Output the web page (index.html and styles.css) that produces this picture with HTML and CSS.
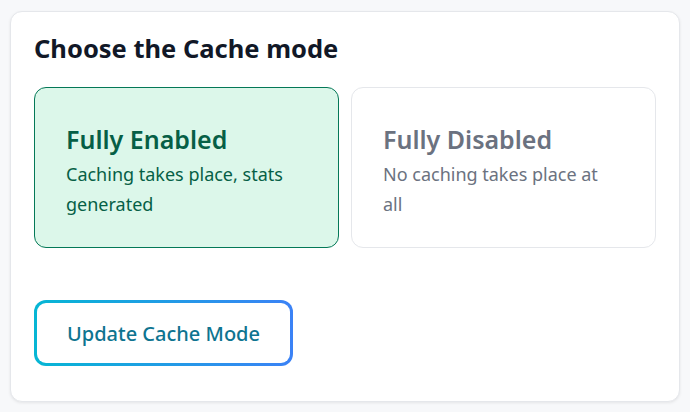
FILE: index.html
```html
<!DOCTYPE html>
<html>
<head>
<meta charset="utf-8">
<link rel="stylesheet" href="styles.css">
</head>
<body>
<div class="card">
  <h2 class="title">Choose the Cache mode</h2>
  <div class="options">
    <div class="option active">
      <div class="opt-title">Fully Enabled</div>
      <div class="opt-desc">Caching takes place, stats generated</div>
    </div>
    <div class="option">
      <div class="opt-title">Fully Disabled</div>
      <div class="opt-desc">No caching takes place at all</div>
    </div>
  </div>
  <button class="btn"><span>Update Cache Mode</span></button>
</div>
</body>
</html>
```
FILE: styles.css
```css
* { box-sizing: border-box; }
html, body { margin: 0; padding: 0; }
body {
  background: #f7f8fa;
  font-family: "Noto Sans", "Open Sans", sans-serif;
  padding: 11px 10px;
  width: 690px;
  height: 412px;
}
.card {
  background: #fff;
  border: 1px solid #e5e7eb;
  border-radius: 12px;
  box-shadow: 0 1px 3px rgba(0,0,0,0.08);
  padding: 19px 23px 35px 23px;
  height: 391px;
}
.title {
  margin: 0 0 22px 0;
  font-size: 25.5px;
  font-weight: 700;
  color: #111827;
  line-height: 34px;
}
.options {
  display: grid;
  grid-template-columns: 1fr 1fr;
  gap: 12px;
}
.option {
  border: 1px solid #e5e7eb;
  border-radius: 12px;
  height: 161px;
  padding: 34px 31px 0 31px;
  background: #fff;
}
.option.active {
  background: #dcf7ea;
  border-color: #047857;
}
.opt-title {
  font-size: 25px;
  font-weight: 600;
  line-height: 34px;
  color: #6b7280;
}
.opt-desc {
  font-size: 18px;
  line-height: 30px;
  color: #6b7280;
  margin-top: 3px;
  padding-right: 10px;
}
.option.active .opt-title, .option.active .opt-desc { color: #065f46; }
.btn {
  margin-top: 52px;
  width: 259px;
  height: 66px;
  border: 3px solid transparent;
  border-radius: 12px;
  background: linear-gradient(#fff, #fff) padding-box,
              linear-gradient(90deg, #06b6d4, #3b82f6) border-box;
  font-family: inherit;
  font-size: 20px;
  font-weight: 500;
  color: #0e7490;
  padding: 0;
  display: block;
}
```
